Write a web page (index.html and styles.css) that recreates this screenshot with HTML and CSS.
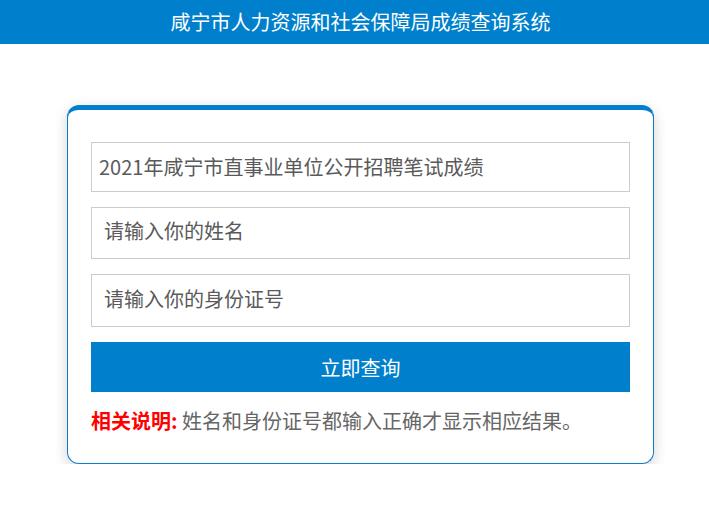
FILE: index.html
```html
<!DOCTYPE html>
<html lang="zh">
<head>
<meta charset="utf-8">
<title>咸宁市人力资源和社会保障局成绩查询系统</title>
<link rel="stylesheet" href="styles.css">
</head>
<body>
<header class="topbar">咸宁市人力资源和社会保障局成绩查询系统</header>
<main class="wrap">
  <form class="card">
    <div class="field field-select">2021年咸宁市直事业单位公开招聘笔试成绩</div>
    <input class="field field-name" type="text" placeholder="请输入你的姓名">
    <input class="field field-id" type="text" placeholder="请输入你的身份证号">
    <button class="btn" type="button">立即查询</button>
    <p class="note"><span class="note-label">相关说明:</span> 姓名和身份证号都输入正确才显示相应结果。</p>
  </form>
</main>
</body>
</html>
```
FILE: styles.css
```css
* { box-sizing: border-box; }
html, body {
  margin: 0;
  padding: 0;
  background: #fff;
  font-family: "Noto Sans CJK SC", "Liberation Sans", sans-serif;
}
.topbar {
  height: 44px;
  background: #0080cc;
  color: #fff;
  font-size: 20px;
  line-height: 44px;
  text-align: center;
  padding-left: 12px;
}
.wrap {
  display: flex;
  justify-content: center;
  padding-top: 61px;
  padding-left: 12px;
}
.card {
  width: 587px;
  border: 1px solid #0a7ccb;
  border-top: 5px solid #0080cc;
  border-radius: 12px;
  background: #fff;
  box-shadow: 0 4px 14px rgba(0,0,0,0.18);
  padding: 32px 23px 28px;
  display: flex;
  flex-direction: column;
  gap: 15px;
}
.field {
  display: block;
  width: 100%;
  height: 52px;
  border: 1px solid #ccc;
  background: #fff;
  font-family: inherit;
  font-size: 20px;
  color: #5a5a5a;
  padding: 0 12px 5px;
  outline: none;
  margin: 0;
}
.field::placeholder { color: #5a5a5a; }
.field-select {
  height: 50px;
  line-height: 47px;
  padding: 0 7px;
}
.field-id { height: 53px; }
.btn {
  height: 50px;
  border: 0;
  background: #0080cc;
  color: #fff;
  font-family: inherit;
  font-size: 20px;
  margin: 0;
}
.note {
  margin: 0;
  font-size: 20px;
  color: #666;
  line-height: 28px;
}
.note-label {
  color: #f00;
  font-weight: bold;
}
```
